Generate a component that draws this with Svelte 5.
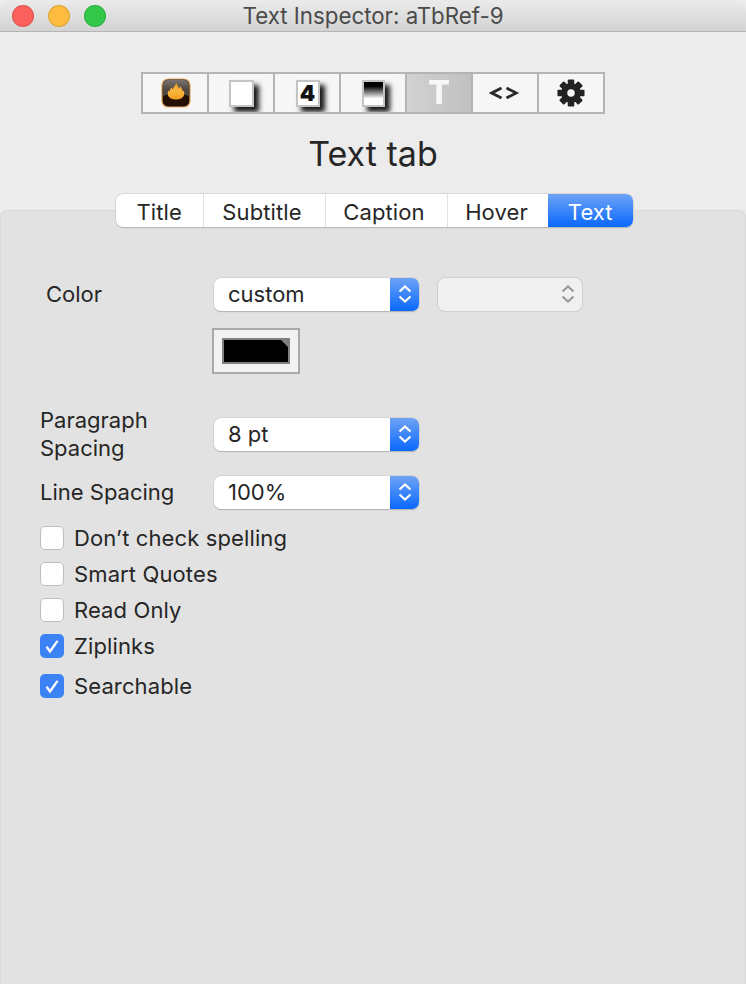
<script>
  const tabs = ['Title', 'Subtitle', 'Caption', 'Hover', 'Text'];
  const checks = [
    { label: 'Don’t check spelling', on: false },
    { label: 'Smart Quotes', on: false },
    { label: 'Read Only', on: false },
    { label: 'Ziplinks', on: true },
    { label: 'Searchable', on: true }
  ];
</script>

<div class="window">
  <header class="titlebar">
    <div class="lights">
      <span class="light red"></span>
      <span class="light yellow"></span>
      <span class="light green"></span>
    </div>
    <div class="title">Text Inspector: aTbRef-9</div>
  </header>

  <div class="top">
    <div class="toolbar">
      <div class="tool">
        <svg class="fire" width="30" height="30" viewBox="0 0 30 30">
          <defs>
            <linearGradient id="sky" x1="0" y1="0" x2="0" y2="1">
              <stop offset="0" stop-color="#7b7673" /><stop offset="0.6" stop-color="#4e4640" />
            </linearGradient>
            <linearGradient id="flame" x1="0" y1="0" x2="0" y2="1">
              <stop offset="0" stop-color="#f6a52e" /><stop offset="0.55" stop-color="#f8b63e" /><stop offset="1" stop-color="#f09a1e" />
            </linearGradient>
          </defs>
          <rect x="1" y="1" width="28" height="28" rx="6" fill="#241003" stroke="#e2ab62" stroke-width="1.200" />
          <path d="M1.700 18.500V7.500a5.600 5.600 0 0 1 5.600-5.800h15.400a5.600 5.600 0 0 1 5.600 5.800v11C24 16 19.500 15 15 15S6 16 1.700 18.500Z" fill="url(#sky)" />
          <path d="M15.500 5c.3 2.500 1.800 3.300 2.600 5.400.7-.6 1-1.400 1-2.200 1.600 1.700 2.400 3.500 2.600 5.300l1.300-1c.2 1.200.3 2.200.3 3 0 3.900-3.500 6-8.300 6s-8.300-2.100-8.300-6c0-1 .2-2 .6-3l1.300 1.200c.1-2 1-3.400 2.200-4.500.1 1 .4 1.600.9 2C12 9.500 14.500 7.600 15.500 5Z" fill="url(#flame)" />
        </svg>
      </div>
      <div class="tool">
        <div class="page plain"></div>
      </div>
      <div class="tool">
        <div class="page num">4</div>
      </div>
      <div class="tool">
        <div class="page grad"></div>
      </div>
      <div class="tool active"><span class="bigt">T</span></div>
      <div class="tool">
        <svg width="32" height="16" viewBox="0 0 32 16">
          <path d="M12.500 3 2.800 8l9.700 5M17.500 3l9.700 5-9.700 5" fill="none" stroke="#2a2a2a" stroke-width="2.800" />
        </svg>
      </div>
      <div class="tool">
        <svg width="28" height="28" viewBox="0 0 30 30">
          <g fill="#222">
            <circle cx="15" cy="15" r="10.500" />
            <rect x="11.500" y="0.500" width="7" height="29" rx="1" />
            <rect x="11.500" y="0.500" width="7" height="29" rx="1" transform="rotate(45 15 15)" />
            <rect x="11.500" y="0.500" width="7" height="29" rx="1" transform="rotate(90 15 15)" />
            <rect x="11.500" y="0.500" width="7" height="29" rx="1" transform="rotate(135 15 15)" />
          </g>
          <circle cx="15" cy="15" r="4" fill="#f6f6f6" />
        </svg>
      </div>
    </div>
    <h1>Text tab</h1>
  </div>

  <main class="panel">
    <div class="tabs">
      {#each tabs as t, i}
        <div class="tab tab{i}" class:selected={t === 'Text'}>{t}</div>
      {/each}
    </div>

    <div class="row color-row">
      <div class="label color-label">Color</div>
      <div class="select">
        <span>custom</span>
        <span class="stepper">
          <svg width="14" height="22" viewBox="0 0 14 22"><path d="M1.500 8.500 7 3.500 12.500 8.500M1.500 13.500 7 18.500 12.500 13.500" fill="none" stroke="#fff" stroke-width="2.200" /></svg>
        </span>
      </div>
      <div class="select disabled">
        <span class="stepper-off">
          <svg width="14" height="22" viewBox="0 0 14 22"><path d="M1.500 8.500 7 3.500 12.500 8.500M1.500 13.500 7 18.500 12.500 13.500" fill="none" stroke="#999" stroke-width="2.200" /></svg>
        </span>
      </div>
    </div>

    <div class="well"><div class="swatch"><span class="corner"></span></div></div>

    <div class="row para-row">
      <div class="label">Paragraph<br />Spacing</div>
      <div class="select">
        <span>8 pt</span>
        <span class="stepper">
          <svg width="14" height="22" viewBox="0 0 14 22"><path d="M1.500 8.500 7 3.500 12.500 8.500M1.500 13.500 7 18.500 12.500 13.500" fill="none" stroke="#fff" stroke-width="2.200" /></svg>
        </span>
      </div>
    </div>

    <div class="row line-row">
      <div class="label">Line Spacing</div>
      <div class="select">
        <span>100%</span>
        <span class="stepper">
          <svg width="14" height="22" viewBox="0 0 14 22"><path d="M1.500 8.500 7 3.500 12.500 8.500M1.500 13.500 7 18.500 12.500 13.500" fill="none" stroke="#fff" stroke-width="2.200" /></svg>
        </span>
      </div>
    </div>

    <div class="checks">
      {#each checks as c}
        <div class="check" class:last={c.label === 'Searchable'}>
          <span class="box" class:on={c.on}>
            {#if c.on}
              <svg width="24" height="24" viewBox="0 0 24 24"><path d="M6.500 12.800 10 17.500 17.500 6.800" fill="none" stroke="#fff" stroke-width="2.300" /></svg>
            {/if}
          </span>
          <span class="check-label">{c.label}</span>
        </div>
      {/each}
    </div>
  </main>
</div>

<style>
  :global(body) {
    margin: 0;
    background: #ececec;
  }
  .window {
    width: 746px;
    height: 984px;
    display: flex;
    flex-direction: column;
    background: #ececec;
    font-family: "Inter", "Liberation Sans", sans-serif;
    color: #262626;
    overflow: hidden;
  }
  .titlebar {
    height: 31px;
    flex: none;
    display: flex;
    align-items: center;
    position: relative;
    border-bottom: 1px solid #b4b4b4;
    background: linear-gradient(#ebebeb, #d3d3d3);
    border-radius: 10px 10px 0 0;
  }
  .lights {
    display: flex;
    gap: 14px;
    padding-left: 12px;
  }
  .light {
    width: 22px;
    height: 22px;
    border-radius: 50%;
    box-sizing: border-box;
    border: 1px solid rgba(0, 0, 0, 0.12);
  }
  .red { background: #fc615d; }
  .yellow { background: #fdbc40; }
  .green { background: #34c84a; }
  .title {
    position: absolute;
    left: 0;
    right: 0;
    text-align: center;
    font-size: 22.3px;
    color: #4a4a4a;
  }
  .top {
    flex: none;
    height: 178px;
    display: flex;
    flex-direction: column;
    align-items: center;
  }
  .toolbar {
    margin-top: 40px;
    display: flex;
    border: 2px solid #b4b4b4;
    background: #b4b4b4;
    gap: 2px;
    height: 38px;
  }
  .tool {
    width: 64px;
    display: flex;
    align-items: center;
    justify-content: center;
    background: #f6f6f6;
    overflow: hidden;
  }
  .tool.active {
    background: linear-gradient(90deg, #d2d2d2, #c0c0c0);
  }
  .fire { margin-left: 1px; }
  .bigt {
    font-size: 32px;
    font-weight: 800;
    color: #f8f8f8;
    line-height: 1;
    filter: blur(0.4px);
  }
  .page {
    width: 25px;
    height: 27px;
    margin-left: 1px;
    box-sizing: border-box;
    border: 2px solid #c4c4c4;
    background: #fff;
    box-shadow: 5px 5px 5px #1a1a1a;
  }
  .num {
    width: 24px;
    font-size: 22px;
    font-weight: 900;
    color: #111;
    line-height: 23px;
    text-align: center;
  }
  .grad {
    width: 23px;
    background: linear-gradient(#000 0%, #000 18%, #fff 72%);
  }
  h1 {
    margin: 15px 0 0;
    font-size: 34px;
    font-weight: 400;
    line-height: 50px;
    color: #262626;
  }
  .panel {
    flex: 1;
    position: relative;
    background: #e2e2e2;
    border: 1px solid #d8d8d8;
    border-bottom: 0;
    border-radius: 8px 8px 0 0;
    font-size: 22px;
    padding: 0 0 0 39px;
  }
  .tabs {
    position: absolute;
    top: -17px;
    left: 115px;
    display: flex;
    height: 33px;
    border-radius: 7px;
    background: #fff;
    box-shadow: 0 0 0 0.5px #c6c6c6, 0 1px 1px #a8a8a8;
  }
  .tab {
    display: flex;
    align-items: center;
    justify-content: center;
    padding-top: 2px;
    box-sizing: border-box;
    border-left: 1.5px solid #e2e2e2;
    letter-spacing: 0.1px;
  }
  .tab0 { width: 86.5px; border-left: 0; }
  .tab1 { width: 122px; padding-right: 4px; }
  .tab2 { width: 122px; padding-right: 4px; }
  .tab3 { width: 101px; padding-right: 2px; }
  .tab4 { width: 85.5px; }
  .tab.selected {
    border-left: 0;
    color: #fff;
    border-radius: 0 7px 7px 0;
    background: linear-gradient(#6ea3f5, #0a68fb);
  }
  .row {
    display: flex;
    position: relative;
    align-items: center;
  }
  .label {
    width: 174px;
    flex: none;
    line-height: 28px;
  }
  .color-row {
    margin-top: 66px;
    height: 34px;
  }
  .color-label { padding-left: 6px; width: 168px; }
  .select {
    width: 205px;
    height: 33px;
    box-sizing: border-box;
    display: flex;
    align-items: center;
    justify-content: space-between;
    padding-left: 14px;
    background: #fff;
    border-radius: 7px;
    box-shadow: 0 0 0 0.5px #c6c6c6, 0 1px 1px #a0a0a0;
    position: relative;
    overflow: hidden;
  }
  .stepper {
    width: 29px;
    height: 33px;
    display: flex;
    align-items: center;
    justify-content: center;
    background: linear-gradient(#6ea3f5, #0a68fb);
  }
  .disabled {
    width: 144px;
    margin-left: 19px;
    justify-content: flex-end;
    padding: 0 7px 0 0;
    background: #f0f0f0;
    box-shadow: 0 0 0 1px #d0d0d0;
  }
  .stepper-off { display: flex; }
  .well {
    margin: 17px 0 0 172px;
    width: 88px;
    height: 46px;
    box-sizing: border-box;
    border: 2px solid #a9a9a9;
    background: #f2f2f2;
    padding: 8px;
  }
  .swatch {
    height: 26px;
    box-sizing: border-box;
    border: 2px solid #808080;
    background: #000;
    position: relative;
    overflow: hidden;
  }
  .corner {
    position: absolute;
    top: 0;
    right: 0;
    border-style: solid;
    border-width: 0 7px 7px 0;
    border-color: transparent #808080 transparent transparent;
  }
  .para-row {
    margin-top: 32px;
    height: 56px;
  }
  .line-row {
    margin-top: 13px;
    height: 34px;
  }
  .checks {
    margin-top: 11px;
    display: flex;
    flex-direction: column;
  }
  .check {
    display: flex;
    align-items: center;
    gap: 10px;
    height: 36px;
  }
  .check.last { margin-top: 4px; }
  .check-label { letter-spacing: 0.12px; }
  .box {
    width: 24px;
    height: 24px;
    flex: none;
    box-sizing: border-box;
    border-radius: 5px;
    background: #fff;
    border: 1px solid #bdbdbd;
    display: block;
    overflow: hidden;
  }
  .box.on {
    border: 0;
    background: #3d82f5;
  }
  .box svg { display: block; }
</style>
